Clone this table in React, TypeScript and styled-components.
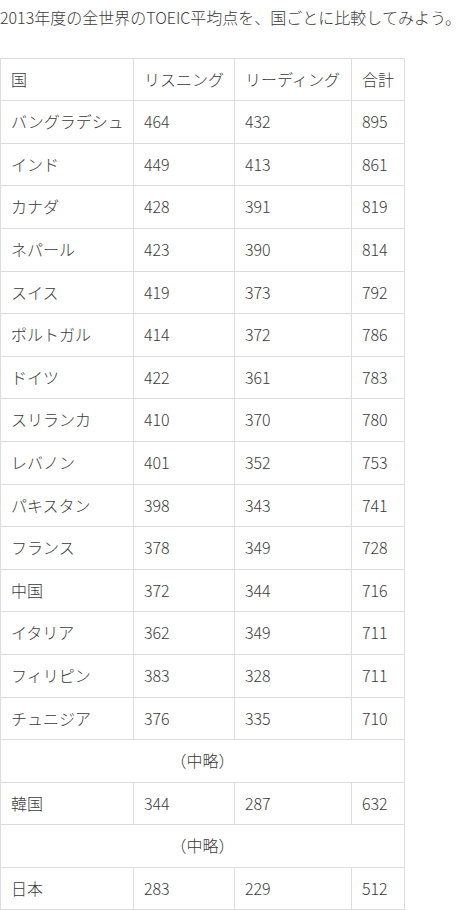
import styled, { createGlobalStyle } from "styled-components";

const GlobalStyle = createGlobalStyle`
  html, body {
    margin: 0;
    padding: 0;
    background: #ffffff;
  }
  body {
    font-family: "Noto Sans CJK JP", "Noto Sans", sans-serif;
    color: #3a3a3a;
    font-size: 16px;
  }
`;

const Article = styled.div`
  width: 470px;
  padding-top: 5px;
`;

const Lead = styled.p`
  margin: 0 0 27px;
  font-size: 16px;
  font-weight: 300;
  line-height: 25.6px;
  white-space: nowrap;
`;

const ScoreTable = styled.table`
  border-collapse: collapse;
  table-layout: fixed;
  width: 405px;
`;

const Cell = styled.td<{ $center?: boolean }>`
  border: 1px solid #dddddd;
  padding: 8px 10px;
  line-height: 25.6px;
  font-size: 16px;
  font-weight: 300;
  text-align: ${(p) => (p.$center ? "center" : "left")};
  white-space: nowrap;
  overflow: hidden;
`;

type Row = [string, number, number, number] | "omit";

const rows: Row[] = [
  ["バングラデシュ", 464, 432, 895],
  ["インド", 449, 413, 861],
  ["カナダ", 428, 391, 819],
  ["ネパール", 423, 390, 814],
  ["スイス", 419, 373, 792],
  ["ポルトガル", 414, 372, 786],
  ["ドイツ", 422, 361, 783],
  ["スリランカ", 410, 370, 780],
  ["レバノン", 401, 352, 753],
  ["パキスタン", 398, 343, 741],
  ["フランス", 378, 349, 728],
  ["中国", 372, 344, 716],
  ["イタリア", 362, 349, 711],
  ["フィリピン", 383, 328, 711],
  ["チュニジア", 376, 335, 710],
  "omit",
  ["韓国", 344, 287, 632],
  "omit",
  ["日本", 283, 229, 512],
];

export default function App() {
  return (
    <Article>
      <GlobalStyle />
      <Lead>2013年度の全世界のTOEIC平均点を、国ごとに比較してみよう。</Lead>
      <ScoreTable>
        <colgroup>
          <col style={{ width: 133 }} />
          <col style={{ width: 101 }} />
          <col style={{ width: 117 }} />
          <col style={{ width: 53 }} />
        </colgroup>
        <tbody>
          <tr>
            <Cell>国</Cell>
            <Cell>リスニング</Cell>
            <Cell>リーディング</Cell>
            <Cell>合計</Cell>
          </tr>
          {rows.map((r, i) =>
            r === "omit" ? (
              <tr key={i}>
                <Cell colSpan={4} $center>
                  （中略）
                </Cell>
              </tr>
            ) : (
              <tr key={i}>
                <Cell>{r[0]}</Cell>
                <Cell>{r[1]}</Cell>
                <Cell>{r[2]}</Cell>
                <Cell>{r[3]}</Cell>
              </tr>
            )
          )}
        </tbody>
      </ScoreTable>
    </Article>
  );
}
